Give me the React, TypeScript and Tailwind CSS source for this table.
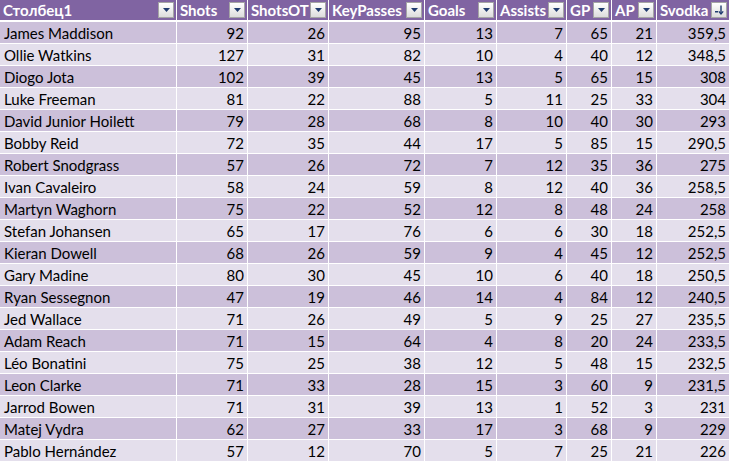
import React from 'react';

const cols = ['Столбец1', 'Shots', 'ShotsOT', 'KeyPasses', 'Goals', 'Assists', 'GP', 'AP', 'Svodka'];

const rows: (string | number)[][] = [
  ['James Maddison', 92, 26, 95, 13, 7, 65, 21, '359,5'],
  ['Ollie Watkins', 127, 31, 82, 10, 4, 40, 12, '348,5'],
  ['Diogo Jota', 102, 39, 45, 13, 5, 65, 15, '308'],
  ['Luke Freeman', 81, 22, 88, 5, 11, 25, 33, '304'],
  ['David Junior Hoilett', 79, 28, 68, 8, 10, 40, 30, '293'],
  ['Bobby Reid', 72, 35, 44, 17, 5, 85, 15, '290,5'],
  ['Robert Snodgrass', 57, 26, 72, 7, 12, 35, 36, '275'],
  ['Ivan Cavaleiro', 58, 24, 59, 8, 12, 40, 36, '258,5'],
  ['Martyn Waghorn', 75, 22, 52, 12, 8, 48, 24, '258'],
  ['Stefan Johansen', 65, 17, 76, 6, 6, 30, 18, '252,5'],
  ['Kieran Dowell', 68, 26, 59, 9, 4, 45, 12, '252,5'],
  ['Gary Madine', 80, 30, 45, 10, 6, 40, 18, '250,5'],
  ['Ryan Sessegnon', 47, 19, 46, 14, 4, 84, 12, '240,5'],
  ['Jed Wallace', 71, 26, 49, 5, 9, 25, 27, '235,5'],
  ['Adam Reach', 71, 15, 64, 4, 8, 20, 24, '233,5'],
  ['Léo Bonatini', 75, 25, 38, 12, 5, 48, 15, '232,5'],
  ['Leon Clarke', 71, 33, 28, 15, 3, 60, 9, '231,5'],
  ['Jarrod Bowen', 71, 31, 39, 13, 1, 52, 3, '231'],
  ['Matej Vydra', 62, 27, 33, 17, 3, 68, 9, '229'],
  ['Pablo Hernández', 57, 12, 70, 5, 7, 25, 21, '226'],
];

function FilterButton({ sorted }: { sorted?: boolean }) {
  return (
    <div className="w-[16px] h-[16px] shrink-0 border border-[#a5a5a5] bg-gradient-to-b from-white to-[#dcdcdc] flex items-center justify-center">
      {sorted ? (
        <svg width="12" height="12" viewBox="0 0 12 12">
          <rect x="2" y="7" width="3" height="1.5" fill="#1f3a6e" />
          <path d="M8 1.5 V9.5" stroke="#1f3a6e" strokeWidth="1.4" />
          <path d="M5.8 7.3 L8 10 L10.2 7.3" stroke="#1f3a6e" strokeWidth="1.3" fill="none" />
        </svg>
      ) : (
        <svg width="9" height="6" viewBox="0 0 9 6">
          <path d="M1 1 H8 L4.5 5 Z" fill="#1f3a6e" />
        </svg>
      )}
    </div>
  );
}

export default function App() {
  return (
    <div
      className="w-[730px] h-[462px] overflow-hidden bg-white text-[15px] text-black"
      style={{ fontFamily: 'Lato, "Open Sans", sans-serif' }}
    >
      <div className="grid grid-cols-[177px_71px_81px_96px_72px_70px_45px_45px_73px]">
        {cols.map((c, i) => (
          <div
            key={c}
            className="h-[22px] bg-[#8064a2] border-r border-b-2 border-white flex items-center justify-between pl-[3px] pr-[2px]"
          >
            <span className="font-bold text-white leading-none">{c}</span>
            <FilterButton sorted={i === cols.length - 1} />
          </div>
        ))}
        {rows.map((r, ri) =>
          r.map((v, ci) => (
            <div
              key={ri + '-' + ci}
              className={`h-[22px] pt-[2px] border-r border-b border-white flex items-center leading-none ${
                ri % 2 === 0 ? 'bg-[#ccc0da]' : 'bg-[#e4dfec]'
              } ${ci === 0 ? 'justify-start pl-[4px]' : 'justify-end pr-[3px]'}`}
            >
              {v}
            </div>
          ))
        )}
      </div>
    </div>
  );
}
